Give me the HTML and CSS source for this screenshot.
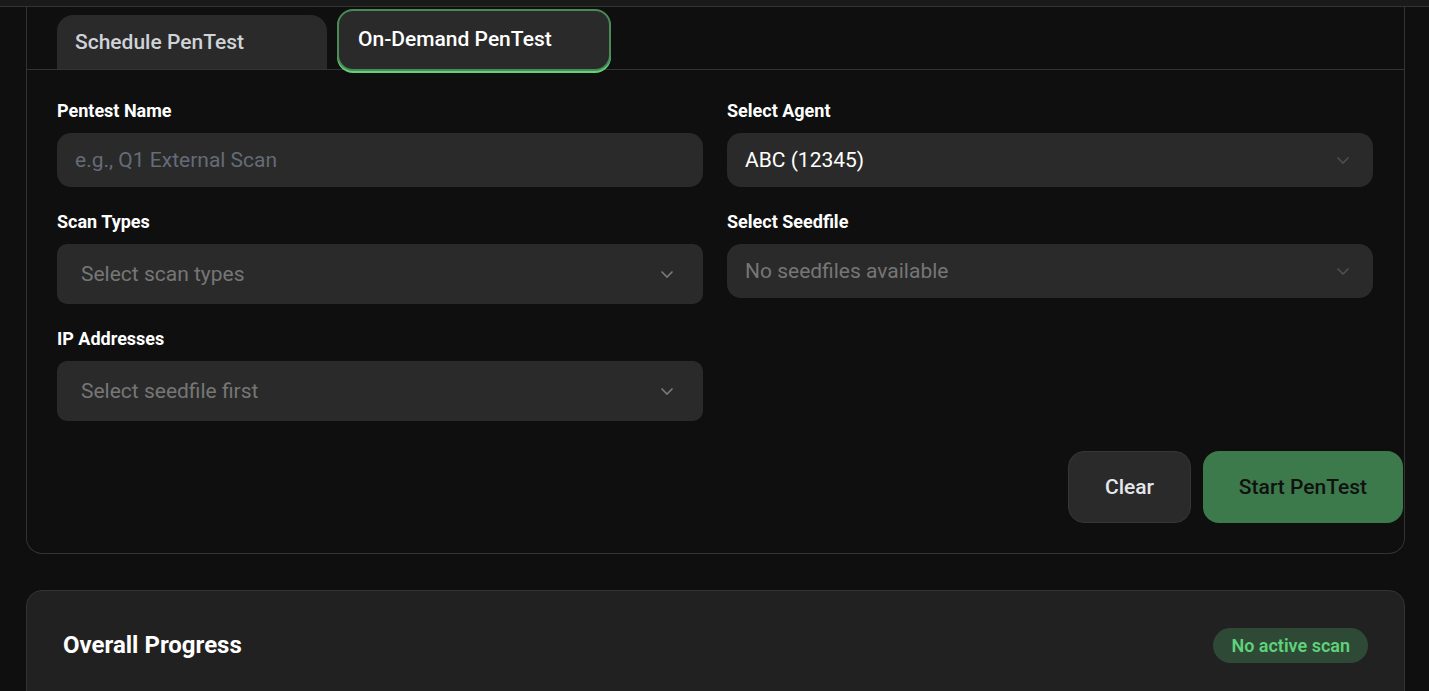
FILE: index.html
```html
<!DOCTYPE html>
<html>
<head>
    <meta charset="UTF-8">
    <link rel="stylesheet" href="styles.css">
</head>
<body>
    <div class="topbar"></div>
    <div class="main">
        <!-- 扫描表单 -->
        <div class="card">
            <div class="tabs">
                <div class="tab">Schedule PenTest</div>
                <div class="tab active">On-Demand PenTest</div>
            </div>
            <div class="form">
                <div class="field">
                    <label class="label">Pentest Name</label>
                    <input class="input" type="text" placeholder="e.g., Q1 External Scan">
                </div>
                <div class="field">
                    <label class="label">Select Agent</label>
                    <div class="select">
                        <span class="value">ABC (12345)</span>
                        <svg class="chev dim" width="14" height="9" viewBox="0 0 14 9"><path d="M1.5 1.5L7 7l5.5-5.5" fill="none" stroke="currentColor" stroke-width="1.6"/></svg>
                    </div>
                </div>
                <div class="field">
                    <label class="label">Scan Types</label>
                    <div class="select tall">
                        <span class="ph">Select scan types</span>
                        <svg class="chev" width="14" height="9" viewBox="0 0 14 9"><path d="M1.5 1.5L7 7l5.5-5.5" fill="none" stroke="currentColor" stroke-width="1.6"/></svg>
                    </div>
                </div>
                <div class="field">
                    <label class="label">Select Seedfile</label>
                    <div class="select">
                        <span class="ph">No seedfiles available</span>
                        <svg class="chev dim" width="14" height="9" viewBox="0 0 14 9"><path d="M1.5 1.5L7 7l5.5-5.5" fill="none" stroke="currentColor" stroke-width="1.6"/></svg>
                    </div>
                </div>
                <div class="field">
                    <label class="label">IP Addresses</label>
                    <div class="select tall">
                        <span class="ph">Select seedfile first</span>
                        <svg class="chev" width="14" height="9" viewBox="0 0 14 9"><path d="M1.5 1.5L7 7l5.5-5.5" fill="none" stroke="currentColor" stroke-width="1.6"/></svg>
                    </div>
                </div>
            </div>
            <div class="actions">
                <button class="btn btn-clear">Clear</button>
                <button class="btn btn-start">Start PenTest</button>
            </div>
        </div>
        <!-- 总进度 -->
        <div class="progress-card">
            <div class="progress-head">
                <h2 class="title">Overall Progress</h2>
                <span class="badge">No active scan</span>
            </div>
        </div>
    </div>
</body>
</html>
```

FILE: styles.css
```css
*{box-sizing: border-box;}
body{
    margin: 0;padding: 0;
    background: #0f0f0f;
    font-family: Roboto, "Noto Sans", sans-serif;
    color: #fff;
    overflow: hidden;
}

.topbar{height: 7px;background: #1a1a1a;border-bottom: 1px solid #333;}
.main{padding: 0 24px 0 26px;}

.card{
    border: 1px solid #333;border-top: none;
    border-radius: 0 0 16px 16px;
    background: #0f0f0f;
}
.tabs{
    display: flex;align-items: flex-end;gap: 10px;
    height: 63px;padding-left: 30px;
    border-bottom: 1px solid #333;
}
.tab{
    width: 270px;height: 54px;
    padding: 15px 0 0 18px;
    background: #2a2a2a;
    border-radius: 16px 16px 0 0;
    color: #cfd3d9;font-size: 21px;font-weight: 500;
}
.tab.active{
    width: 274px;height: 62px;margin-bottom: -2px;
    padding: 16px 0 0 19px;
    border: 2px solid #4a8a57;
    border-radius: 16px;
    box-shadow: 0 2px 0 #5fd27a;
    color: #fff;
}

.form{
    display: grid;grid-template-columns: 1fr 1fr;
    column-gap: 24px;row-gap: 25px;
    align-items: start;
    padding: 31px 31px 0 30px;
}
.field{display: flex;flex-direction: column;gap: 12px;}
.label{font-size: 18px;font-weight: 700;line-height: 20px;color: #fff;}
.input, .select{
    height: 54px;width: 100%;
    background: #2a2a2a;border: none;border-radius: 14px;
    font-family: inherit;font-size: 21px;
    padding: 0 18px;
}
.input{color: #fff;outline: none;}
.input::placeholder{color: #656b77;}
.select{display: flex;align-items: center;justify-content: space-between;padding-right: 23px;}
.select.tall{height: 60px;border-radius: 10px;padding-left: 24px;padding-right: 29px;}
.value{color: #fff;}
.ph{color: #767676;}
.chev{color: #7a7a7a;}
.chev.dim{color: #4f4f4f;}

.actions{
    display: flex;justify-content: flex-end;gap: 12px;
    padding: 30px 1px 30px 0;
}
.btn{
    height: 72px;border-radius: 16px;
    font-family: inherit;font-size: 21px;font-weight: 500;
    border: none;
}
.btn-clear{width: 123px;background: #2a2a2a;border: 1px solid #363636;color: #e4e7eb;}
.btn-start{width: 200px;background: #3c7a4b;color: #111;}

.progress-card{
    margin-top: 36px;height: 200px;
    background: #212121;
    border: 1px solid #333;border-radius: 16px;
}
.progress-head{
    display: flex;justify-content: space-between;align-items: center;
    padding: 36px 36px 0 36px;
}
.title{margin: 0;font-size: 24px;font-weight: 700;line-height: 36px;}
.badge{
    height: 35px;line-height: 35px;padding: 0 18px;
    background: #2e4a36;border-radius: 18px;
    color: #5fd27a;font-size: 18px;font-weight: 600;
}
```
